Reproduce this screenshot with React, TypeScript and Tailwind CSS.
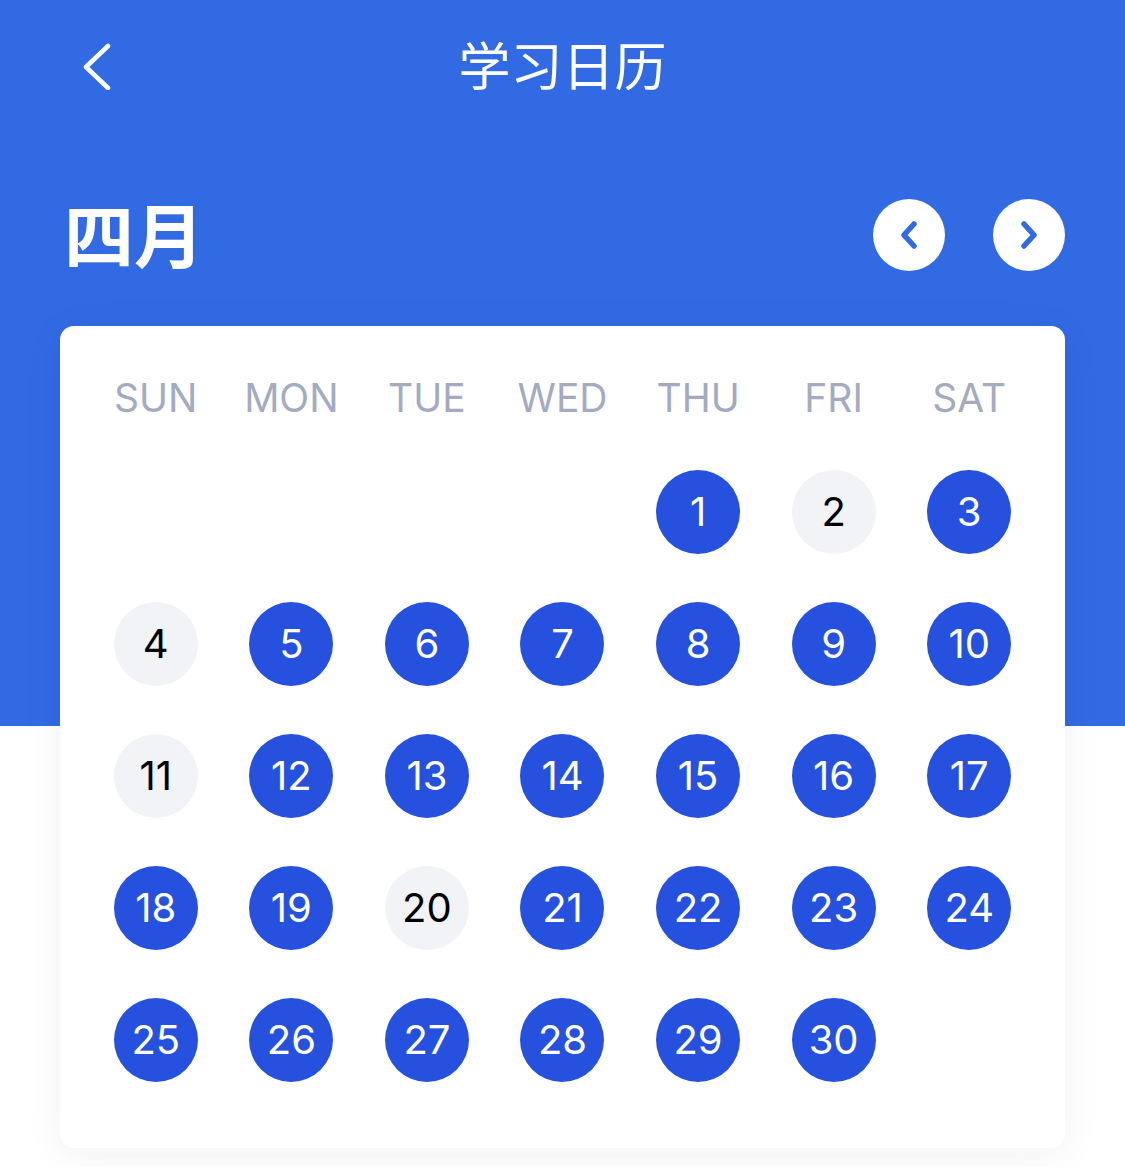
import React from "react";

const days = ["SUN", "MON", "TUE", "WED", "THU", "FRI", "SAT"];
const gray = new Set([2, 4, 11, 20]);

export default function App() {
  const cells: (number | null)[] = [null, null, null, null];
  for (let i = 1; i <= 30; i++) cells.push(i);
  return (
    <div
      className="min-h-[1167px] w-[1125px] bg-white"
      style={{ fontFamily: "Inter, 'Noto Sans CJK SC', sans-serif" }}
    >
      <div className="h-[726px] bg-[#316ae3]">
        <div className="relative flex h-[134px] items-center justify-center pb-[6px]">
          <svg
            className="absolute left-[82px] top-[42px]"
            width="30"
            height="48"
            viewBox="0 0 30 48"
            fill="none"
          >
            <path d="M26 4 L4 25 L26 46" stroke="white" strokeWidth="4.5" strokeLinecap="round" strokeLinejoin="round" />
          </svg>
          <span
            className="text-[52px] leading-none text-white"
            style={{ fontFamily: "'Noto Sans CJK SC', sans-serif" }}
          >
            学习日历
          </span>
        </div>
        <div className="flex h-[202px] items-start justify-between pl-[64px] pr-[60px] pt-[64px]">
          <span
            className="text-[70px] font-semibold leading-none text-white"
            style={{ fontFamily: "'Noto Sans CJK SC', sans-serif" }}
          >
            四月
          </span>
          <div className="flex gap-[48px] pt-[1px]">
            <button className="flex h-[72px] w-[72px] items-center justify-center rounded-full bg-white">
              <svg width="20" height="28" viewBox="0 0 20 28" fill="none">
                <path d="M15 3 L5 14 L15 25" stroke="#316ae3" strokeWidth="5.5" strokeLinecap="round" strokeLinejoin="round" />
              </svg>
            </button>
            <button className="flex h-[72px] w-[72px] items-center justify-center rounded-full bg-white">
              <svg width="20" height="28" viewBox="0 0 20 28" fill="none">
                <path d="M5 3 L15 14 L5 25" stroke="#316ae3" strokeWidth="5.5" strokeLinecap="round" strokeLinejoin="round" />
              </svg>
            </button>
          </div>
        </div>
      </div>
      <div className="mx-[60px] -mt-[400px] rounded-[14px] bg-white px-[28px] pb-[66px] pt-[47px] shadow-[0_6px_40px_rgba(30,40,80,0.06)]">
        <div className="grid grid-cols-7">
          {days.map((d) => (
            <div key={d} className="flex h-[48px] items-center justify-center text-[39px] leading-none text-[#a4abc1]">
              {d}
            </div>
          ))}
        </div>
        <div className="mt-[49px] grid grid-cols-7 gap-y-[48px]">
          {cells.map((n, i) => (
            <div key={i} className="flex justify-center">
              {n === null ? (
                <div className="h-[84px] w-[84px]" />
              ) : gray.has(n) ? (
                <div className="flex h-[84px] w-[84px] items-center justify-center rounded-full bg-[#f2f3f7] text-[40px] leading-none text-black">
                  {n}
                </div>
              ) : (
                <div className="flex h-[84px] w-[84px] items-center justify-center rounded-full bg-[#2651de] text-[40px] leading-none text-white">
                  {n}
                </div>
              )}
            </div>
          ))}
        </div>
      </div>
    </div>
  );
}
